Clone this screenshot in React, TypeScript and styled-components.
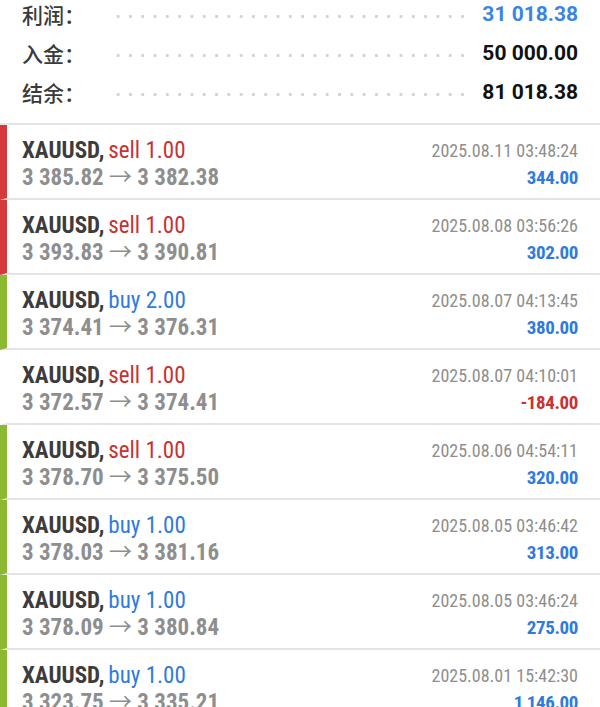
import React from "react";
import styled, { createGlobalStyle } from "styled-components";

const Global = createGlobalStyle`
  html, body { margin: 0; padding: 0; background: #ffffff; }
  body { font-family: Roboto, "Noto Sans CJK SC", sans-serif; overflow: hidden; }
`;

const Page = styled.div`
  width: 600px;
  height: 707px;
  overflow: hidden;
  background: #fff;
`;

const Summary = styled.section`
  margin-top: -6px;
  padding: 0 22px 12px 22px;
`;

const SummaryRow = styled.div`
  display: flex;
  align-items: center;
  height: 39px;
`;

const Label = styled.span`
  width: 93px;
  flex: none;
  font-family: "Noto Sans CJK SC", sans-serif;
  font-size: 21px;
  font-weight: 500;
  color: #3a3a3a;
`;

const Leader = styled.span`
  flex: 1;
  height: 5px;
  margin-top: 5px;
  margin-right: 16px;
  background-image: radial-gradient(circle, #d2d2d2 1.3px, transparent 1.8px);
  background-size: 12.3px 5px;
  background-repeat: repeat-x;
  background-position: -3px 0;
`;

const Value = styled.span<{ $blue?: boolean }>`
  flex: none;
  text-align: right;
  font-size: 21px;
  font-weight: 700;
  color: ${(p) => (p.$blue ? "#3a84e6" : "#111")};
`;

const List = styled.div`
  border-top: 2px solid #e4e4e4;
`;

const Row = styled.div<{ $bar?: string }>`
  display: flex;
  justify-content: space-between;
  height: 61px;
  padding: 12px 22px 0 15px;
  border-bottom: 2px solid #e4e4e4;
  border-left: 7px solid ${(p) => p.$bar ?? "transparent"};
`;

const Col = styled.div<{ $right?: boolean }>`
  display: flex;
  flex-direction: column;
  align-items: ${(p) => (p.$right ? "flex-end" : "flex-start")};
`;

const Line = styled.div`
  height: 27px;
  line-height: 27px;
  white-space: nowrap;
`;

const Symbol = styled.span`
  font-size: 23px;
  font-weight: 700;
  color: #3c3c3c;
  font-stretch: 87%;
`;

const Side = styled.span<{ $buy: boolean }>`
  font-size: 23px;
  font-weight: 400;
  color: ${(p) => (p.$buy ? "#2f7ae0" : "#c73232")};
  font-stretch: 87%;
`;

const Prices = styled.span`
  font-size: 23px;
  font-weight: 700;
  color: #8e8e8e;
  font-stretch: 87%;
`;

const Arrow = styled.span`
  font-weight: 400;
`;

const DateText = styled.span`
  font-size: 18px;
  color: #8e8e8e;
  font-stretch: 87%;
`;

const Profit = styled.span<{ $neg: boolean }>`
  font-size: 19px;
  font-weight: 700;
  letter-spacing: -0.4px;
  color: ${(p) => (p.$neg ? "#c73232" : "#2f7ae0")};
  font-stretch: 87%;
`;

type Trade = {
  side: "buy" | "sell";
  vol: string;
  open: string;
  close: string;
  date: string;
  profit: string;
  bar?: string;
};

const RED = "#d43a3a";
const GREEN = "#8cb832";

const trades: Trade[] = [
  { side: "sell", vol: "1.00", open: "3 385.82", close: "3 382.38", date: "2025.08.11 03:48:24", profit: "344.00", bar: RED },
  { side: "sell", vol: "1.00", open: "3 393.83", close: "3 390.81", date: "2025.08.08 03:56:26", profit: "302.00", bar: RED },
  { side: "buy", vol: "2.00", open: "3 374.41", close: "3 376.31", date: "2025.08.07 04:13:45", profit: "380.00", bar: GREEN },
  { side: "sell", vol: "1.00", open: "3 372.57", close: "3 374.41", date: "2025.08.07 04:10:01", profit: "-184.00" },
  { side: "sell", vol: "1.00", open: "3 378.70", close: "3 375.50", date: "2025.08.06 04:54:11", profit: "320.00", bar: GREEN },
  { side: "buy", vol: "1.00", open: "3 378.03", close: "3 381.16", date: "2025.08.05 03:46:42", profit: "313.00", bar: GREEN },
  { side: "buy", vol: "1.00", open: "3 378.09", close: "3 380.84", date: "2025.08.05 03:46:24", profit: "275.00", bar: GREEN },
  { side: "buy", vol: "1.00", open: "3 323.75", close: "3 335.21", date: "2025.08.01 15:42:30", profit: "1 146.00", bar: GREEN },
];

export default function App() {
  return (
    <Page>
      <Global />
      <Summary>
        <SummaryRow>
          <Label>利润：</Label>
          <Leader />
          <Value $blue>31 018.38</Value>
        </SummaryRow>
        <SummaryRow>
          <Label>入金：</Label>
          <Leader />
          <Value>50 000.00</Value>
        </SummaryRow>
        <SummaryRow>
          <Label>结余：</Label>
          <Leader />
          <Value>81 018.38</Value>
        </SummaryRow>
      </Summary>
      <List>
        {trades.map((t, i) => (
          <Row key={i} $bar={t.bar}>
            <Col>
              <Line>
                <Symbol>XAUUSD,</Symbol> <Side $buy={t.side === "buy"}>{t.side} {t.vol}</Side>
              </Line>
              <Line>
                <Prices>
                  {t.open} <Arrow>→</Arrow> {t.close}
                </Prices>
              </Line>
            </Col>
            <Col $right>
              <Line>
                <DateText>{t.date}</DateText>
              </Line>
              <Line>
                <Profit $neg={t.profit.startsWith("-")}>{t.profit}</Profit>
              </Line>
            </Col>
          </Row>
        ))}
      </List>
    </Page>
  );
}
